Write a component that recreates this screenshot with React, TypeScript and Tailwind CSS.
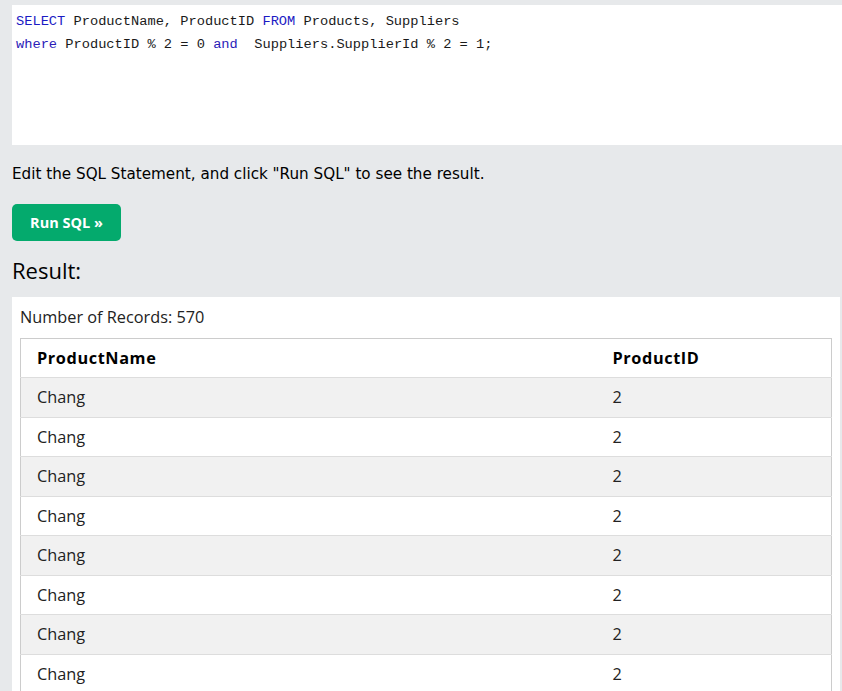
import React from "react";

const rows = Array.from({ length: 8 }, () => ({ name: "Chang", id: 2 }));

export default function App() {
  return (
    <div className="min-h-screen bg-[#e7e9eb] pl-[12px] pt-[5px] overflow-hidden">
      <div
        className="h-[140px] bg-white pl-[4px] pt-[5px] text-[13.7px] leading-[23px] text-[#1a1a1a]"
        style={{ fontFamily: '"Liberation Mono", "DejaVu Sans Mono", monospace' }}
      >
        <div className="whitespace-pre">
          <span className="text-[#1b1bc4]">SELECT</span> ProductName, ProductID{" "}
          <span className="text-[#1b1bc4]">FROM</span> Products, Suppliers
        </div>
        <div className="whitespace-pre">
          <span className="text-[#2b1bb8]">where</span> ProductID % 2 = 0{" "}
          <span className="text-[#2b1bb8]">and</span>  Suppliers.SupplierId % 2 = 1;
        </div>
      </div>
      <p
        className="mt-[18px] text-[15.2px] leading-[22px] text-black"
        style={{ fontFamily: '"DejaVu Sans", Verdana, sans-serif' }}
      >
        Edit the SQL Statement, and click "Run SQL" to see the result.
      </p>
      <button
        className="mt-[19px] flex h-[37px] w-[109px] items-center justify-center rounded-[5px] bg-[#04aa6d] text-[14.5px] font-bold text-white"
        style={{ fontFamily: '"Open Sans", "Noto Sans", sans-serif' }}
      >
        Run SQL »
      </button>
      <h2
        className="mt-[11px] text-[22px] leading-[36px] text-black"
        style={{ fontFamily: '"Open Sans", "Noto Sans", sans-serif' }}
      >
        Result:
      </h2>
      <div
        className="mt-[9px] w-[828px] bg-white px-[8px] pt-[8px] text-[16.3px] text-[#000]"
        style={{ fontFamily: '"Open Sans", "Noto Sans", sans-serif' }}
      >
        <div className="leading-[24px] text-[#222]">Number of Records: 570</div>
        <table className="mt-[9px] w-[812px] border-collapse border border-[#cccccc]">
          <thead>
            <tr className="h-[39px] bg-white">
              <th className="w-[576px] pl-[16px] text-left font-bold tracking-[0.6px] text-black">ProductName</th>
              <th className="pl-[16px] text-left font-bold tracking-[0.6px] text-black">ProductID</th>
            </tr>
          </thead>
          <tbody>
            {rows.map((r, i) => (
              <tr
                key={i}
                className={`h-[39.5px] border-t border-[#dddddd] ${i % 2 === 0 ? "bg-[#f1f1f1]" : "bg-white"}`}
              >
                <td className="pl-[16px] text-[#222]">{r.name}</td>
                <td className="pl-[16px] text-[#222]">{r.id}</td>
              </tr>
            ))}
          </tbody>
        </table>
      </div>
    </div>
  );
}
